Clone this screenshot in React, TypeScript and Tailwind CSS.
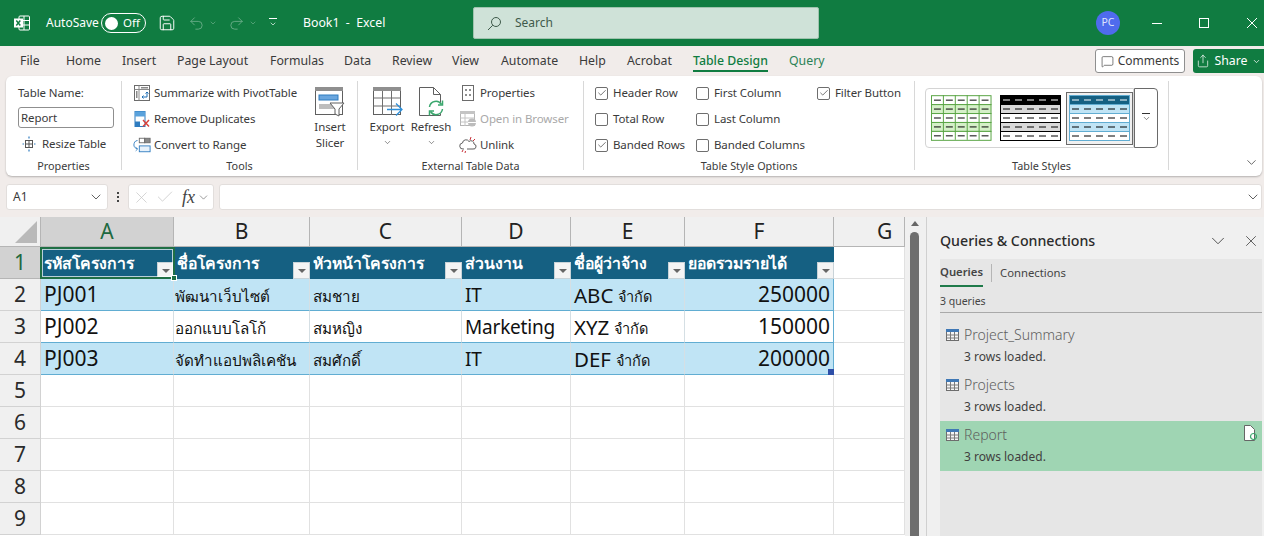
import React from 'react';
import { ChevronDown, X, Check, MessageSquare, Share, Undo2, Redo2, Save } from 'lucide-react';

const columns = [
  { name: 'A', width: 'w-[133px]' },
  { name: 'B', width: 'w-[136px]' },
  { name: 'C', width: 'w-[152px]' },
  { name: 'D', width: 'w-[109px]' },
  { name: 'E', width: 'w-[114px]' },
  { name: 'F', width: 'w-[149px]' },
  { name: 'G', width: 'w-[71px]' },
];

const tabs = [
  { label: 'File', width: 'w-[46px]' },
  { label: 'Home', width: 'w-[56px]' },
  { label: 'Insert', width: 'w-[55px]' },
  { label: 'Page Layout', width: 'w-[93px]' },
  { label: 'Formulas', width: 'w-[74px]' },
  { label: 'Data', width: 'w-[48px]' },
  { label: 'Review', width: 'w-[60px]' },
  { label: 'View', width: 'w-[49px]' },
  { label: 'Automate', width: 'w-[78px]' },
  { label: 'Help', width: 'w-[48px]' },
  { label: 'Acrobat', width: 'w-[66px]' },
];

const headers = ['รหัสโครงการ', 'ชื่อโครงการ', 'หัวหน้าโครงการ', 'ส่วนงาน', 'ชื่อผู้ว่าจ้าง', 'ยอดรวมรายได้'];

const rows = [
  { id: 'PJ001', project: 'พัฒนาเว็บไซต์', lead: 'สมชาย', dept: 'IT', co: 'ABC', total: '250000' },
  { id: 'PJ002', project: 'ออกแบบโลโก้', lead: 'สมหญิง', dept: 'Marketing', co: 'XYZ', total: '150000' },
  { id: 'PJ003', project: 'จัดทำแอปพลิเคชัน', lead: 'สมศักดิ์', dept: 'IT', co: 'DEF', total: '200000' },
];

const queries = ['Project_Summary', 'Projects', 'Report'];

function ExcelLogo() {
  return (
    <svg width="18" height="18" viewBox="0 0 18 18" fill="none">
      <rect x="6" y="2" width="10.5" height="14" rx="1" stroke="white" />
      <path d="M11 2v14M6 6.5h10.5M6 11h10.5" stroke="white" />
      <rect x="1" y="4.5" width="9" height="9" fill="white" />
      <path d="M3.3 6.5l4 5M7.3 6.5l-4 5" stroke="#107c41" strokeWidth="1.4" />
    </svg>
  );
}

function SheetIcon() {
  return (
    <svg width="16" height="14" viewBox="0 0 16 14" fill="none">
      <rect x="1.5" y="1.5" width="12" height="11" fill="#f5f5f5" stroke="#6d6d6d" />
      <rect x="1" y="1" width="13" height="3" fill="#3f78b5" />
      <path d="M1.5 7h12M1.5 10h12M5.5 4v8M9.5 4v8" stroke="#7a7a7a" />
    </svg>
  );
}

function PivotIcon() {
  return (
    <svg width="18" height="18" viewBox="0 0 18 18" fill="none">
      <rect x="1.5" y="1.5" width="15" height="15" stroke="#6b6b6b" />
      <path d="M1.5 5.5h15M6 1.5v15" stroke="#8a8a8a" />
      <rect x="8" y="3" width="7" height="1.5" fill="#8a8a8a" />
      <rect x="3" y="7" width="1.5" height="7" fill="#8a8a8a" />
      <path d="M14 8v5H9m1.5-1.5L9 13l1.5 1.5M12.5 9.5L14 8l1.5 1.5" stroke="#1f6fb5" />
    </svg>
  );
}

function DuplicatesIcon() {
  return (
    <svg width="18" height="18" viewBox="0 0 18 18" fill="none">
      <rect x="2" y="1.5" width="10" height="15" fill="white" stroke="#2f7cc0" />
      <rect x="2" y="1.5" width="10" height="5" fill="#5aa2dc" />
      <rect x="2" y="11.5" width="5" height="5" fill="#2f7cc0" />
      <path d="M10 10l6 6.5M16 10l-6 6.5" stroke="#d9403a" strokeWidth="1.4" />
    </svg>
  );
}

function RangeIcon() {
  return (
    <svg width="20" height="18" viewBox="0 0 20 18" fill="none">
      <rect x="7" y="1.5" width="6" height="5" stroke="#6b6b6b" />
      <rect x="13" y="1.5" width="6" height="5" fill="#8a8a8a" stroke="#6b6b6b" />
      <rect x="7" y="10" width="12" height="6.5" fill="#e8f2fb" stroke="#2f7cc0" />
      <path d="M5 4C2 4 1 7 1 9s1.500 4 4 4M3 11.500L5 13.500 3 15.500" stroke="#2f7cc0" />
    </svg>
  );
}

function SlicerIcon() {
  return (
    <svg width="32" height="32" viewBox="0 0 32 32" fill="none">
      <rect x="1.500" y="1.500" width="27" height="27" fill="white" stroke="#5f5f5f" />
      <rect x="1" y="1" width="28" height="4" fill="#8f8f8f" />
      <rect x="5" y="9" width="19" height="5" fill="#6aa6de" stroke="#2f7cc0" />
      <rect x="5" y="18" width="19" height="5" fill="#bdbdbd" />
      <path d="M16 17h14l-5 6v7l-4-2v-5z" fill="white" stroke="#5f5f5f" />
    </svg>
  );
}

function ExportIcon() {
  return (
    <svg width="32" height="32" viewBox="0 0 32 32" fill="none">
      <rect x="2.500" y="1.500" width="27" height="27" fill="white" stroke="#5f5f5f" />
      <rect x="2" y="1" width="28" height="4" fill="#8f8f8f" />
      <path d="M2.500 12h27M2.500 20h27M11.500 5v24M20.500 5v24" stroke="#6f6f6f" />
      <path d="M16 23.500h15M25 17.500l6 6-6 6" fill="none" stroke="#2f8fd8" strokeWidth="1.300" />
    </svg>
  );
}

function RefreshIcon() {
  return (
    <svg width="32" height="32" viewBox="0 0 32 32" fill="none">
      <path d="M4.500 1.500h14l7 7v21h-21z" fill="white" stroke="#5f5f5f" />
      <path d="M18.500 1.500v7h7" stroke="#5f5f5f" />
      <circle cx="21" cy="22" r="7" fill="white" />
      <path d="M14.500 21a6.500 6.500 0 0 1 12-2.500M27.500 23a6.500 6.500 0 0 1-12 2.500" stroke="#3aa76d" strokeWidth="1.500" />
      <path d="M27.500 14.500v4.500h-4.500M14.500 29.500V25H19" stroke="#3aa76d" strokeWidth="1.500" />
    </svg>
  );
}

function PropertiesIcon() {
  return (
    <svg width="14" height="18" viewBox="0 0 14 18" fill="none">
      <rect x="1.500" y="1.500" width="11" height="15" stroke="#6b6b6b" />
      <path d="M4 6h2M8 6h2M4 11h2M8 11h2" stroke="#6b6b6b" strokeWidth="1.500" />
    </svg>
  );
}

function BrowserIcon() {
  return (
    <svg width="18" height="18" viewBox="0 0 18 18" fill="none">
      <rect x="1.500" y="1.500" width="14" height="14" stroke="#b5b5b5" />
      <rect x="1" y="1" width="15" height="3" fill="#c4c4c4" />
      <path d="M1.500 8h14M1.500 12h14M6 4v12" stroke="#c4c4c4" />
      <circle cx="13" cy="12.500" r="4" fill="#bcbcbc" />
      <path d="M9 12.500h8" stroke="white" />
    </svg>
  );
}

function UnlinkIcon() {
  return (
    <svg width="18" height="18" viewBox="0 0 18 18" fill="none">
      <path d="M5 13H4a3 3 0 0 1-.5-6 3.500 3.500 0 0 1 6.500-1.500 3 3 0 0 1 5 2.500 2.500 2.500 0 0 1-1 5H8" stroke="#5f5f5f" />
      <path d="M11 4l1-3M14 5l2-2M3 16l1-2M6 17l.5-2" stroke="#c8323a" />
    </svg>
  );
}

function ResizeIcon() {
  return (
    <svg width="14" height="16" viewBox="0 0 14 16" fill="none">
      <rect x="3.500" y="4.500" width="7" height="7" stroke="#555" />
      <path d="M3.500 8h7M7 4.500v7" stroke="#555" />
      <path d="M7 .5v2M7 13.500v2M.5 8h1.500M12 8h1.500" stroke="#2f7cc0" strokeWidth="1.200" />
    </svg>
  );
}

function SearchGlass() {
  return (
    <svg width="15" height="15" viewBox="0 0 15 15" fill="none">
      <circle cx="9" cy="6" r="4.5" stroke="#3f5a4b" />
      <path d="M5.800 9.200L1 14" stroke="#3f5a4b" />
    </svg>
  );
}

// one thumbnail of the table styles gallery
function StyleThumb({ line, band, head }: { line: string; band: string; head?: string }) {
  const ys = [0, 9, 18, 27, 36];
  const xs = [0, 12, 24, 36, 48];
  return (
    <svg width="61" height="46" viewBox="0 0 61 46" fill="none">
      {ys.map((y, r) => (
        <rect key={y} x="0.500" y={y + 0.5} width="60" height="9" fill={r === 0 && head ? head : r % 2 ? band : 'white'} stroke={line} />
      ))}
      {!head && xs.slice(1).map((x) => <path key={x} d={`M${x + 0.5} 0v45`} stroke={line} />)}
      {ys.map((y, r) =>
        xs.map((x) => (
          <path key={`${y}-${x}`} d={`M${x + 3} ${y + 5}h7`} stroke={r === 0 && head ? 'white' : 'black'} />
        )),
      )}
    </svg>
  );
}

function RibbonRow({ icon, label, muted }: { icon: React.ReactNode; label: string; muted?: boolean }) {
  return (
    <div className={`flex h-[26px] items-center gap-[3px] whitespace-nowrap ${muted ? 'text-[#a9a9a9]' : ''}`}>
      <span className="flex w-[18px] shrink-0 justify-center">{icon}</span>
      {label}
    </div>
  );
}

function CheckRow({ label, checked }: { label: string; checked?: boolean }) {
  return (
    <div className="flex h-[26px] items-center gap-[5px] whitespace-nowrap">
      <span className="flex h-[13px] w-[13px] items-center justify-center rounded-[2px] border border-[#6e6e6e] bg-white">
        {checked && <Check size={10} strokeWidth={1.6} color="#333" />}
      </span>
      {label}
    </div>
  );
}

function RibbonGroup({ label, width, children }: { label: string; width: string; children: React.ReactNode }) {
  return (
    <div className={`flex h-[89px] shrink-0 flex-col border-r border-[#d8d8d8] ${width}`}>
      <div className="-mt-[1px] flex h-[79px] shrink-0">{children}</div>
      <div className="flex h-[14px] shrink-0 items-center justify-center text-[10.8px] leading-none tracking-normal text-[#3b3b3b]">{label}</div>
    </div>
  );
}

function BigButton({ icon, lines, chevron, width }: { icon: React.ReactNode; lines: string[]; chevron?: boolean; width: string }) {
  return (
    <div className={`mt-[4px] flex flex-col items-center ${width}`}>
      <div className="flex h-[35px] items-center">{icon}</div>
      {lines.map((line) => (
        <div key={line} className="flex h-[16px] items-center whitespace-nowrap">{line}</div>
      ))}
      {chevron && <ChevronDown size={9} strokeWidth={1.5} className="mt-[3px]" />}
    </div>
  );
}

function FilterButton() {
  return (
    <span className="flex h-[17px] w-[17px] shrink-0 items-center justify-center self-end border border-[#c9d3d8] bg-[#f4f4f4]">
      <span className="mt-[1px] h-0 w-0 border-x-[4px] border-t-[4px] border-x-transparent border-t-[#666]" />
    </span>
  );
}

function RowHeader({ n, active }: { n: number; active?: boolean }) {
  return (
    <div className={`flex h-[32px] w-[41px] shrink-0 items-center justify-center border-r border-b pt-[1px] text-[21px] ${active ? 'border-[#b5b5b5] bg-[#d2d2d2] text-[#20693f]' : 'border-[#d2d2d2] bg-[#f0f0f0] text-[#2b2b2b]'}`}>
      {n}
    </div>
  );
}

export default function App() {
  return (
    <div className="flex h-[536px] w-[1264px] flex-col overflow-hidden bg-[#f1ecea] text-[12px] text-[#3a3a3a] [font-family:'Noto_Sans','Open_Sans',sans-serif]">
      {/* title bar */}
      <header className="flex h-[46px] shrink-0 items-center bg-[#107c41] text-white">
        <div className="ml-[13px] w-[33px]"><ExcelLogo /></div>
        <span className="w-[55px]">AutoSave</span>
        <div className="flex h-[20px] w-[45px] items-center gap-[5px] rounded-full border border-white px-[3px] text-[11.5px]">
          <span className="h-[13px] w-[13px] rounded-full bg-white" />
          Off
        </div>
        <Save size={18} strokeWidth={1.3} className="ml-[12px]" />
        <Undo2 size={17} strokeWidth={1.2} className="ml-[12px] text-[#6fb08c]" />
        <ChevronDown size={8} className="ml-[4px] text-[#6fb08c]" />
        <Redo2 size={17} strokeWidth={1.2} className="ml-[11px] text-[#6fb08c]" />
        <ChevronDown size={8} className="ml-[4px] text-[#6fb08c]" />
        <div className="ml-[12px] flex w-[34px] flex-col items-start">
          <span className="mb-[2px] h-[1px] w-[8px] bg-white" />
          <ChevronDown size={8} className="-mt-[1px]" />
        </div>
        <span className="w-[170px] whitespace-nowrap text-[12.3px]">Book1&nbsp; - &nbsp;Excel</span>
        <div className="flex h-[32px] w-[346px] items-center gap-[13px] rounded-[2px] border border-[#9fc3ae] bg-[#cfe2d8] px-[13px] text-[#3f5a4b]">
          <SearchGlass />
          Search
        </div>
        <div className="ml-[277px] flex h-[24px] w-[24px] items-center justify-center rounded-full bg-[#4f6bed] text-[10.5px] text-[#dfe4fb]">PC</div>
        <span className="ml-[32px] h-[1px] w-[10px] bg-white" />
        <span className="ml-[37px] h-[10px] w-[10px] border border-white" />
        <svg width="12" height="12" viewBox="0 0 12 12" className="ml-[37px]" stroke="white" fill="none">
          <path d="M1 1l10 10M11 1L1 11" />
        </svg>
      </header>

      {/* tabs */}
      <nav className="flex h-[30px] shrink-0 items-center pl-[20px]">
        {tabs.map((tab) => (
          <span key={tab.label} className={`${tab.width} whitespace-nowrap pt-[1px] text-[12.3px]`}>{tab.label}</span>
        ))}
        <span className="w-[96px] pt-[1px] text-[12.3px]">
          <span className="inline-block border-b-2 border-[#107c41] font-medium leading-[18px] text-[#107c41]">Table Design</span>
        </span>
        <span className="w-[306px] pt-[1px] text-[12.3px] text-[#2b8256]">Query</span>
        <div className="flex h-[24px] w-[90px] items-center justify-center gap-[4px] rounded-[3px] border border-[#8f8f8f] bg-white">
          <MessageSquare size={13} strokeWidth={1.2} />
          Comments
        </div>
        <div className="ml-[8px] flex h-[24px] w-[71px] items-center justify-center gap-[4px] rounded-l-[3px] bg-[#107c41] text-[12.3px] text-white">
          <Share size={14} strokeWidth={1.2} />
          Share
          <ChevronDown size={9} />
        </div>
      </nav>

      {/* ribbon */}
      <section className="ml-[6px] mr-[2px] flex h-[100px] shrink-0 rounded-[6px] bg-white pt-[5px] text-[11.5px] tracking-[-0.1px] shadow-[0_1px_2px_rgba(0,0,0,0.25)]">
        <RibbonGroup label="Properties" width="w-[116px]">
          <div className="pl-[12px]">
            <div className="flex h-[25px] items-center">Table Name:</div>
            <div className="mt-[2px] flex h-[21px] w-[96px] items-center rounded-[3px] border border-[#8f8f8f] px-[2px]">Report</div>
            <div className="mt-[3px] flex h-[26px] items-center gap-[6px] pl-[4px]"><ResizeIcon />Resize Table</div>
          </div>
        </RibbonGroup>
        <RibbonGroup label="Tools" width="w-[236px]">
          <div className="w-[186px] shrink-0 pl-[11px]">
            <RibbonRow icon={<PivotIcon />} label="Summarize with PivotTable" />
            <RibbonRow icon={<DuplicatesIcon />} label="Remove Duplicates" />
            <RibbonRow icon={<RangeIcon />} label="Convert to Range" />
          </div>
          <BigButton icon={<SlicerIcon />} lines={['Insert', 'Slicer']} width="w-[44px]" />
        </RibbonGroup>
        <RibbonGroup label="External Table Data" width="w-[226px]">
          <BigButton icon={<ExportIcon />} lines={['Export']} chevron width="ml-[6px] w-[46px]" />
          <BigButton icon={<RefreshIcon />} lines={['Refresh']} chevron width="w-[42px]" />
          <div className="pl-[7px]">
            <RibbonRow icon={<PropertiesIcon />} label="Properties" />
            <RibbonRow icon={<BrowserIcon />} label="Open in Browser" muted />
            <RibbonRow icon={<UnlinkIcon />} label="Unlink" />
          </div>
        </RibbonGroup>
        <RibbonGroup label="Table Style Options" width="w-[331px]">
          <div className="w-[112px] shrink-0 pl-[11px]">
            <CheckRow label="Header Row" checked />
            <CheckRow label="Total Row" />
            <CheckRow label="Banded Rows" checked />
          </div>
          <div className="w-[121px] shrink-0">
            <CheckRow label="First Column" />
            <CheckRow label="Last Column" />
            <CheckRow label="Banded Columns" />
          </div>
          <div><CheckRow label="Filter Button" checked /></div>
        </RibbonGroup>
        <RibbonGroup label="Table Styles" width="w-[254px]">
          <div className="ml-[10px] mt-[8px] flex h-[60px] w-[234px]">
            <div className="flex h-[60px] w-[209px] items-center rounded-l-[4px] border border-[#d4d4d4] pl-[5px]">
              <StyleThumb line="#5aa545" band="#d5f0c8" />
              <span className="ml-[8px]"><StyleThumb line="#000000" band="#d9d9d9" head="#000000" /></span>
              <span className="ml-[5px] flex h-[53px] w-[68px] items-center justify-center border border-[#6a6a6a] bg-[#f0f0f0]">
                <StyleThumb line="#61add2" band="#c0e4f5" head="#156082" />
              </span>
            </div>
            <div className="flex h-[60px] w-[24px] flex-col items-center justify-center rounded-r-[4px] border border-[#6a6a6a]">
              <span className="h-[1px] w-[8px] bg-[#333]" />
              <ChevronDown size={9} strokeWidth={1.6} />
            </div>
          </div>
        </RibbonGroup>
        <div className="flex flex-1 items-end justify-end pb-[6px] pr-[3px]">
          <ChevronDown size={15} strokeWidth={1.2} />
        </div>
      </section>

      {/* formula bar */}
      <div className="mt-[8px] flex h-[26px] shrink-0 items-center pl-[6px] pr-[2px]">
        <div className="flex h-[26px] w-[102px] items-center justify-between rounded-[3px] border border-[#e2dedc] bg-white pl-[6px] pr-[3px]">
          A1
          <ChevronDown size={16} strokeWidth={1.2} />
        </div>
        <span className="flex w-[20px] flex-col items-center gap-[2px]">
          <span className="h-[2px] w-[2px] bg-[#444]" />
          <span className="h-[2px] w-[2px] bg-[#444]" />
          <span className="h-[2px] w-[2px] bg-[#444]" />
        </span>
        <div className="flex h-[26px] w-[86px] items-center gap-[4px] rounded-[3px] border border-[#e2dedc] bg-white pl-[3px] text-[#c4c4c4]">
          <X size={19} strokeWidth={0.9} />
          <Check size={20} strokeWidth={0.9} />
          <span className="ml-[3px] flex items-center whitespace-nowrap text-[#444] [font-family:'Liberation_Serif',serif] text-[18px] italic">fx<ChevronDown size={13} strokeWidth={1} className="ml-[2px]" /></span>
        </div>
        <div className="ml-[5px] flex h-[26px] flex-1 items-center justify-end rounded-[3px] border border-[#e2dedc] bg-white">
          <ChevronDown size={16} strokeWidth={1.2} />
        </div>
      </div>

      {/* sheet + side panel */}
      <div className="mt-[7px] flex min-h-0 flex-1">
        <div className="w-[905px] shrink-0 overflow-hidden bg-white">
          <div className="flex h-[30px]">
            <div className="flex w-[41px] shrink-0 items-end justify-end border-r border-b border-[#b5b5b5] bg-[#f0f0f0] pb-[3px] pr-[3px]">
              <span className="h-0 w-0 border-b-[22px] border-l-[22px] border-b-[#b9b9b9] border-l-transparent" />
            </div>
            {columns.map((col, i) => (
              <div key={col.name} className={`${col.width} flex shrink-0 items-center border-r border-b border-[#b5b5b5] pt-[1px] text-[21px] ${i === 6 ? 'justify-start pl-[43px]' : 'justify-center'} ${i === 0 ? 'bg-[#d2d2d2] text-[#20693f]' : 'bg-[#f0f0f0] text-[#222]'}`}>
                {col.name}
              </div>
            ))}
          </div>

          {/* table header */}
          <div className="flex">
            <RowHeader n={1} active />
            {headers.map((head, i) => (
              <div key={head} className={`${columns[i].width} relative flex h-[32px] shrink-0 items-center justify-between bg-[#156082] pl-[3px] text-[15.8px] font-semibold text-white`}>
                <span className="whitespace-nowrap pt-[2px]">{head}</span>
                <FilterButton />
                {i === 0 && (
                  <span className="absolute -inset-x-[1px] inset-y-0 z-10 border-2 border-[#1f6f45] outline outline-1 -outline-offset-3 outline-white/70">
                    <span className="absolute -bottom-[4px] -right-[4px] h-[6px] w-[6px] border border-white bg-[#1f6f45]" />
                  </span>
                )}
              </div>
            ))}
            <div className="h-[32px] w-[71px] shrink-0 border-r border-b border-[#e1e1e1]" />
          </div>

          {/* table rows */}
          {rows.map((row, r) => {
            const band = r % 2 === 0 ? 'bg-[#c0e4f5]' : 'bg-white';
            const cell = `flex h-[32px] shrink-0 items-center border-b border-[#61add2] ${band}`;
            return (
              <div key={row.id} className="flex text-[#111]">
                <RowHeader n={r + 2} />
                <div className={`${columns[0].width} ${cell} border-r border-r-[#d5dfe4] pl-[3px] pt-[1px] text-[21px]`}>{row.id}</div>
                <div className={`${columns[1].width} ${cell} border-r border-r-[#d5dfe4] pl-[1px] pt-[4px] text-[15.2px]`}>{row.project}</div>
                <div className={`${columns[2].width} ${cell} border-r border-r-[#d5dfe4] pl-[3px] pt-[4px] text-[15.2px]`}>{row.lead}</div>
                <div className={`${columns[3].width} ${cell} border-r border-r-[#d5dfe4] pl-[3px] pt-[1px] text-[19px] tracking-[-0.2px]`}>{row.dept}</div>
                <div className={`${columns[4].width} ${cell} gap-[5px] border-r border-r-[#d5dfe4] pl-[3px] pt-[1px] text-[20.5px]`}>
                  {row.co}<span className="pt-[3px] text-[14.5px]">จำกัด</span>
                </div>
                <div className={`${columns[5].width} ${cell} relative justify-end border-r border-r-[#61add2] pr-[3px] pt-[1px] text-[21px]`}>
                  {row.total}
                  {r === 2 && <span className="absolute -bottom-[1px] -right-[1px] h-[6px] w-[6px] bg-[#2e4fa8]" />}
                </div>
                <div className="h-[32px] w-[71px] shrink-0 border-r border-b border-[#e1e1e1]" />
              </div>
            );
          })}

          {/* empty rows */}
          {[5, 6, 7, 8, 9].map((n) => (
            <div key={n} className="flex">
              <RowHeader n={n} />
              {columns.map((col) => (
                <div key={col.name} className={`${col.width} h-[32px] shrink-0 border-r border-b border-[#e1e1e1]`} />
              ))}
            </div>
          ))}
        </div>

        {/* vertical scrollbar */}
        <div className="flex w-[22px] shrink-0 flex-col items-center border-r border-[#d0d0d0] bg-[#f0f0f0] pr-[2px] pt-[4px]">
          <span className="h-0 w-0 border-x-[4px] border-b-[5px] border-x-transparent border-b-[#666]" />
          <span className="mt-[6px] w-[9px] flex-1 rounded-t-full bg-[#6e6e6e]" />
        </div>

        {/* queries panel */}
        <aside className="flex min-w-0 flex-1 flex-col bg-[#f0f0f0] pl-[13px] pr-[2px]">
          <div className="flex h-[42px] shrink-0 items-center justify-between pr-[2px] pt-[6px] text-[14.2px] font-medium text-[#2b2b2b]">
            Queries &amp; Connections
            <span className="flex items-center gap-[13px] text-[#333]">
              <ChevronDown size={22} strokeWidth={0.9} />
              <X size={18} strokeWidth={1} />
            </span>
          </div>
          <div className="flex-1 bg-[#e6e6e6] text-[#444]">
            <div className="flex h-[28px] items-center text-[11.3px]">
              <span className="flex h-[28px] items-center border-b-2 border-[#1f7a4a] font-semibold">Queries</span>
              <span className="mx-[8px] h-[18px] w-[1px] bg-[#b5b5b5]" />
              Connections
            </div>
            <div className="flex h-[26px] items-end border-b border-[#a9a9a9] pb-[2px] text-[10.5px]">3 queries</div>
            <div className="pt-[8px]">
              {queries.map((name) => (
                <div key={name} className={`flex h-[50px] items-start pl-[5px] pr-[5px] pt-[4px] ${name === 'Report' ? 'bg-[#9fd5b3]' : ''}`}>
                  <span className="mt-[3px] w-[19px]"><SheetIcon /></span>
                  <div className="flex-1">
                    <div className="text-[14px] font-light leading-[20px] text-[#5e5e5e]">{name}</div>
                    <div className="text-[12px] leading-[24px] text-[#3f3f3f]">3 rows loaded.</div>
                  </div>
                  {name === 'Report' && (
                    <svg width="14" height="16" viewBox="0 0 14 16" fill="none">
                      <path d="M1.500 .5h6l4 4v11h-10z" fill="white" stroke="#666" />
                      <circle cx="10.500" cy="11.500" r="3" stroke="#3aa76d" strokeWidth="1.200" />
                    </svg>
                  )}
                </div>
              ))}
            </div>
          </div>
        </aside>
      </div>
    </div>
  );
}
